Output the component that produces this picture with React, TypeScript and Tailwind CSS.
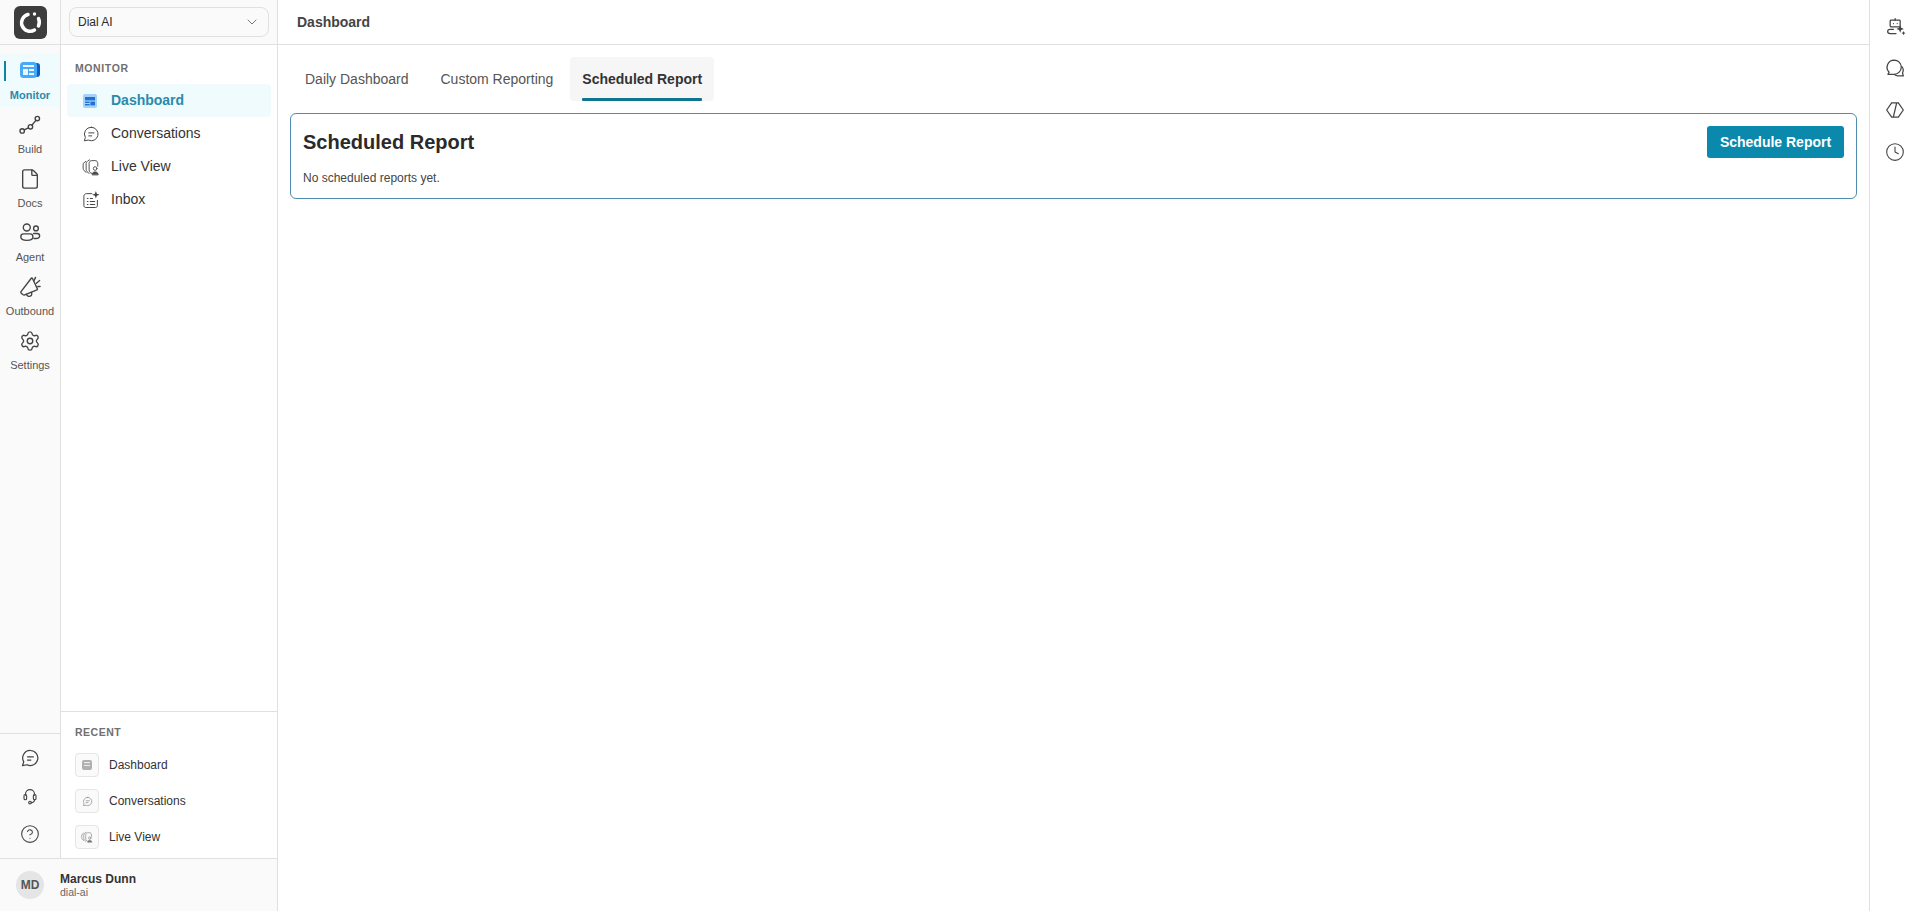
import React from 'react';
import { ChevronDown, CircleHelp, Clock, File, Settings } from 'lucide-react';

type IconProps = { className?: string };

const Svg = ({ className, children, sw = 1.5 }: IconProps & { children: React.ReactNode; sw?: number }) => (
  <svg
    viewBox="0 0 24 24"
    fill="none"
    stroke="currentColor"
    strokeWidth={sw}
    strokeLinecap="round"
    strokeLinejoin="round"
    className={className}
  >
    {children}
  </svg>
);

const MonitorIcon = () => (
  <svg viewBox="0 0 20 16" className="h-4 w-5">
    <rect x="9" y="1" width="11" height="14" rx="3" fill="#0b5fc4" />
    <rect x="0" y="0" width="17" height="16" rx="3.5" fill="#4aa8f8" />
    <rect x="3" y="3" width="11" height="2" fill="#eaf6ff" />
    <rect x="3" y="7" width="5" height="6" fill="#eaf6ff" />
    <rect x="9" y="7" width="5" height="2" fill="#eaf6ff" />
    <rect x="9" y="11" width="5" height="2" fill="#eaf6ff" />
  </svg>
);

const DashIcon = () => (
  <svg viewBox="0 0 14 14" className="h-[14px] w-[14px]">
    <rect width="14" height="14" rx="2" fill="#a3d2fc" />
    <rect x="2" y="3" width="10" height="3.4" fill="#2470d0" />
    <rect x="2" y="7.6" width="4.6" height="1.4" fill="#2470d0" />
    <rect x="2" y="10" width="4.6" height="1.4" fill="#2470d0" />
    <rect x="7.4" y="7.6" width="4.6" height="3.8" fill="#2470d0" />
  </svg>
);

const BuildIcon = ({ className }: IconProps) => (
  <Svg className={className}>
    <circle cx="3.5" cy="18.500" r="2.400" />
    <circle cx="12.500" cy="14" r="2.400" />
    <circle cx="20" cy="5" r="2.400" />
    <path d="M5.800 17.400 10.200 15.100M14 12.200 18.500 6.900" />
  </Svg>
);

const AgentIcon = ({ className }: IconProps) => (
  <Svg className={className}>
    <circle cx="8.500" cy="6" r="3.800" />
    <circle cx="18.500" cy="7" r="2.600" />
    <path d="M5 13h7c2 0 3.200 1.300 3.200 3s-1.400 4-6.500 4-6.700-2-6.700-4 1-3 3-3Z" />
    <path d="M16 12.500h3.800c1.600 0 2.700 1 2.700 2.500s-1.200 3-4 3h-2.200" />
  </Svg>
);

const OutboundIcon = ({ className }: IconProps) => (
  <Svg className={className}>
    <path d="M13 3 2.200 17c-.5 1-.2 1.400.3 1.700l2 1.800c.8.500 1.200.5 1.700 0L19 15.500c1.500-.5 1.300-1.200.8-2L15 3.200c-1-1.500-1.400-1-2-.2Z" />
    <path d="M8 20c1 2.500 4 3 5.500 1 .6-.9.5-2 .2-3" />
    <path d="M16.500 5 18 1.500M19 8l3.500-3M20.500 11.500H23" />
  </Svg>
);

const ChatIcon = ({ className, sw }: IconProps & { sw?: number }) => (
  <Svg className={className} sw={sw}>
    <path d="M12.500 3a9 9 0 1 1-4 17.100l-5.500 1 1.500-4.500A9 9 0 0 1 12.500 3Z" />
    <path d="M9 10.500h7M9 14.500h4" />
  </Svg>
);

const LiveIcon = ({ className }: IconProps) => (
  <Svg className={className} sw={1.2}>
    <path d="M5.500 19C3 17.500 1.500 16 1.500 13.500V7.500L5 4.500" />
    <path d="M9.500 20.500C7 19 5.500 17.500 5.500 15V7.500c0-1.500 1-2.500 2-3.500L10 2.500" />
    <path d="M13 20.500c-2-.5-3.500-2-3.500-4.500V7c0-2 1.500-3.500 3.500-3.500h4.500C19.500 3.500 21 5 21 7v4" />
    <circle cx="17.500" cy="14" r="2.400" />
    <path fill="currentColor" d="M13.500 22c0-2 1.500-3.500 4-3.500s4 1.500 4 3.500Z" />
  </Svg>
);

const InboxIcon = ({ className }: IconProps) => (
  <Svg className={className} sw={1.3}>
    <path d="M13 3.500H6C4 3.500 2.500 5 2.500 7v12.500c0 1.500 1 2.500 2.500 2.500h13c1.500 0 2.500-1 2.500-2.500v-7" />
    <path d="M7 10h1M11 10h3M7 14h1M11 14h6M7 18h1M11 18h6" />
    <path fill="currentColor" stroke="none" d="M18.500 0l1.300 3.700 3.700 1.300-3.700 1.300-1.300 3.700-1.300-3.700L13.500 5l3.700-1.300Z" />
  </Svg>
);

const HeadsetIcon = ({ className }: IconProps) => (
  <Svg className={className}>
    <path d="M6 11V9.500a6 6 0 0 1 12 0V11" />
    <rect x="4" y="10" width="3.500" height="7" rx="1.700" />
    <rect x="16.500" y="10" width="3.500" height="7" rx="1.700" />
    <path d="M18 17c0 2.500-2 3.800-4.500 3.800" />
    <circle cx="12" cy="20.800" r="1.800" />
  </Svg>
);

const BotIcon = ({ className }: IconProps) => (
  <Svg className={className}>
    <rect x="5" y="5" width="12" height="8" rx="1" />
    <path d="M11 5V3M9 9h0M13.500 9h0" />
    <path d="M9 16H5c-2 0-3 1-3 2.500S3 21 5 21h7" />
    <path fill="currentColor" stroke="none" d="M17 11l1.300 3.200 3.200 1.300-3.200 1.300L17 20l-1.300-3.200-3.200-1.300 3.200-1.300Z" />
    <path fill="currentColor" stroke="none" d="M21 18l.8 1.700 1.700.8-1.700.8L21 23l-.8-1.700-1.700-.8 1.700-.8Z" />
  </Svg>
);

const ThreadIcon = ({ className }: IconProps) => (
  <Svg className={className}>
    <path d="M11 2.500a8.500 8.500 0 0 1 8.500 8.500c0 4.700-3.800 8.500-8.500 8.500H3.500l1.500-2.500A8.500 8.500 0 0 1 11 2.500Z" />
    <path d="M20 10c2 2 2.200 5.500 1 8l1 3.500h-6.500c-1.500 0-3-.5-4-1.500" />
  </Svg>
);

const CodeIcon = ({ className }: IconProps) => (
  <Svg className={className}>
    <path d="M8 3.500 2 12l6 8.500M16 3.500l6 8.500-6 8.500M8 3.500h8M8 20.500h8M14 3.500 10 20.500" />
  </Svg>
);

const railItems = [
  { label: 'Build', icon: <BuildIcon className="h-[22px] w-[22px]" /> },
  { label: 'Docs', icon: <File className="h-[22px] w-[22px]" strokeWidth={1.5} /> },
  { label: 'Agent', icon: <AgentIcon className="h-[22px] w-[22px]" /> },
  { label: 'Outbound', icon: <OutboundIcon className="h-[22px] w-[22px]" /> },
  { label: 'Settings', icon: <Settings className="h-[22px] w-[22px]" strokeWidth={1.5} /> },
];

const navItems = [
  { label: 'Conversations', icon: <ChatIcon className="h-[18px] w-[18px]" sw={1.3} /> },
  { label: 'Live View', icon: <LiveIcon className="h-[18px] w-[18px]" /> },
  { label: 'Inbox', icon: <InboxIcon className="h-[18px] w-[18px]" /> },
];

const recentItems = [
  {
    label: 'Dashboard',
    icon: (
      <svg viewBox="0 0 10 10" className="h-[10px] w-[10px]">
        <rect width="10" height="10" rx="2" fill="#b0b0b0" />
        <rect x="2" y="2" width="6" height="1.200" fill="#ececec" />
        <rect x="2" y="5" width="6" height="1" fill="#ececec" />
      </svg>
    ),
  },
  { label: 'Conversations', icon: <ChatIcon className="h-[11px] w-[11px] text-[#888]" /> },
  { label: 'Live View', icon: <LiveIcon className="h-[12px] w-[12px] text-[#777]" /> },
];

export default function App() {
  return (
    <div className="flex h-[911px] w-[1920px] overflow-hidden bg-white font-['Liberation_Sans',Arial,sans-serif] text-[#2a2a2a]">
      {/* left column: rail, nav and the user strip under them */}
      <div className="flex w-[278px] shrink-0 flex-col border-r border-[#e0e0e0]">
        <div className="flex h-[45px] shrink-0 border-b border-[#e0e0e0]">
          <div className="flex w-[61px] shrink-0 items-center justify-center border-r border-[#e0e0e0] bg-[#fafafa] pl-px">
            <svg viewBox="0 0 33 33" className="h-[33px] w-[33px]" fill="none" strokeLinecap="round">
              <rect width="33" height="33" rx="6" fill="#3d3d3d" />
              <g stroke="#fff" strokeWidth="3.500">
                <path d="M14 8.500A8.500 8.500 0 1 0 20.500 24" />
                <path d="M24.500 12.500A9 9 0 0 1 24.500 20" />
              </g>
              <circle cx="20.500" cy="8" r="1.700" fill="#fff" />
            </svg>
          </div>
          <div className="flex flex-1 items-center bg-[#fafafa] px-2">
            <div className="flex h-[30px] w-[200px] items-center justify-between rounded-[8px] border border-[#e0e0e0] bg-[#fafafa] px-2 text-[12px]">
              <span>Dial AI</span>
              <ChevronDown className="h-4 w-4 text-[#777]" strokeWidth={1.5} />
            </div>
          </div>
        </div>

        <div className="flex min-h-0 flex-1">
          <div className="flex w-[61px] shrink-0 flex-col border-r border-[#e0e0e0] bg-[#fafafa]">
            <div className="flex-1 pt-2">
              <div className="relative flex h-[54px] flex-col items-center justify-between bg-[#f0fbfe] pb-1 pt-[9px]">
                <span className="absolute left-1 top-[8px] h-5 w-[2px] bg-[#0e84a5]" />
                <MonitorIcon />
                <span className="text-[11px] font-bold leading-4 text-[#2a8aab]">Monitor</span>
              </div>
              {railItems.map((item) => (
                <div key={item.label} className="flex h-[54px] flex-col items-center justify-between pb-1 pt-[7px] text-[#444]">
                  {item.icon}
                  <span className="text-[11px] leading-4 text-[#555]">{item.label}</span>
                </div>
              ))}
            </div>
            <div className="flex h-[125px] shrink-0 flex-col items-center gap-[18px] border-t border-[#e0e0e0] pt-[14px] text-[#444]">
              <ChatIcon className="h-5 w-5" />
              <HeadsetIcon className="my-px h-[18px] w-[18px]" />
              <CircleHelp className="h-5 w-5" strokeWidth={1.3} />
            </div>
          </div>

          <div className="flex min-w-0 flex-1 flex-col">
            <div className="flex-1 px-[6px] pt-[16px]">
              <div className="pl-2 text-[10.500px] font-bold leading-[14px] tracking-[0.6px] text-[#707070]">MONITOR</div>
              <div className="mt-[9px] flex h-[33px] items-center gap-[14px] rounded-[4px] bg-[#f0fbfe] pl-[16px] text-[14px] font-bold text-[#2a8aab]">
                <DashIcon />
                <span>Dashboard</span>
              </div>
              {navItems.map((item) => (
                <div key={item.label} className="flex h-[33px] items-center gap-[11px] pl-[15px] text-[14px] text-[#333]">
                  <span className="text-[#444]">{item.icon}</span>
                  <span>{item.label}</span>
                </div>
              ))}
            </div>
            <div className="h-[147px] shrink-0 border-t border-[#e0e0e0] pl-[14px] pt-[13px]">
              <div className="text-[10.500px] font-bold leading-[14px] tracking-[0.5px] text-[#707070]">RECENT</div>
              <div className="mt-2">
                {recentItems.map((item) => (
                  <div key={item.label} className="flex h-[36px] items-center gap-[10px] text-[12px] text-[#333]">
                    <span className="flex h-6 w-6 items-center justify-center rounded-[4px] border border-[#e5e5e5] bg-[#fafafa]">
                      {item.icon}
                    </span>
                    <span>{item.label}</span>
                  </div>
                ))}
              </div>
            </div>
          </div>
        </div>

        <div className="flex h-[53px] shrink-0 items-center gap-4 border-t border-[#e0e0e0] bg-[#fafafa] pl-4">
          <div className="flex h-7 w-7 items-center justify-center rounded-full bg-[#e5e5e5] text-[12px] font-bold text-[#555]">MD</div>
          <div>
            <div className="text-[12px] font-bold leading-[14px] text-[#333]">Marcus Dunn</div>
            <div className="text-[10.500px] leading-[12px] text-[#666]">dial-ai</div>
          </div>
        </div>
      </div>

      <div className="flex min-w-0 flex-1 flex-col">
        <div className="flex h-[45px] shrink-0 items-center border-b border-[#e0e0e0] pl-[19px] text-[14px] font-bold text-[#444]">
          Dashboard
        </div>
        <div className="px-3 pt-3">
          <div className="flex h-11 items-stretch text-[14px] text-[#555]">
            <div className="flex items-center px-[15px]">Daily Dashboard</div>
            <div className="flex items-center px-[17px]">Custom Reporting</div>
            <div className="relative flex items-center rounded-[4px] bg-[#f6f6f6] px-3 font-bold text-[#333]">
              Scheduled Report
              <span className="absolute bottom-0 left-3 right-3 h-[3px] rounded-[1px] bg-[#0e7490]" />
            </div>
          </div>
          <div className="mt-3 h-[86px] rounded-[6px] border border-[#4f8cb0] px-3 pt-3">
            <div className="flex items-center justify-between">
              <h2 className="text-[20px] font-bold text-[#2a2a2a]">Scheduled Report</h2>
              <button className="h-8 w-[137px] rounded-[3px] bg-[#0a89ad] text-[14px] font-bold text-white">Schedule Report</button>
            </div>
            <p className="mt-3 text-[12px] leading-4 text-[#444]">No scheduled reports yet.</p>
          </div>
        </div>
      </div>

      <div className="flex w-[51px] shrink-0 flex-col items-center gap-[22px] border-l border-[#e0e0e0] pt-[16px] text-[#444]">
        <BotIcon className="h-5 w-5 translate-x-px" />
        <ThreadIcon className="h-5 w-5" />
        <CodeIcon className="h-5 w-5" />
        <Clock className="h-5 w-5" strokeWidth={1.3} />
      </div>
    </div>
  );
}
